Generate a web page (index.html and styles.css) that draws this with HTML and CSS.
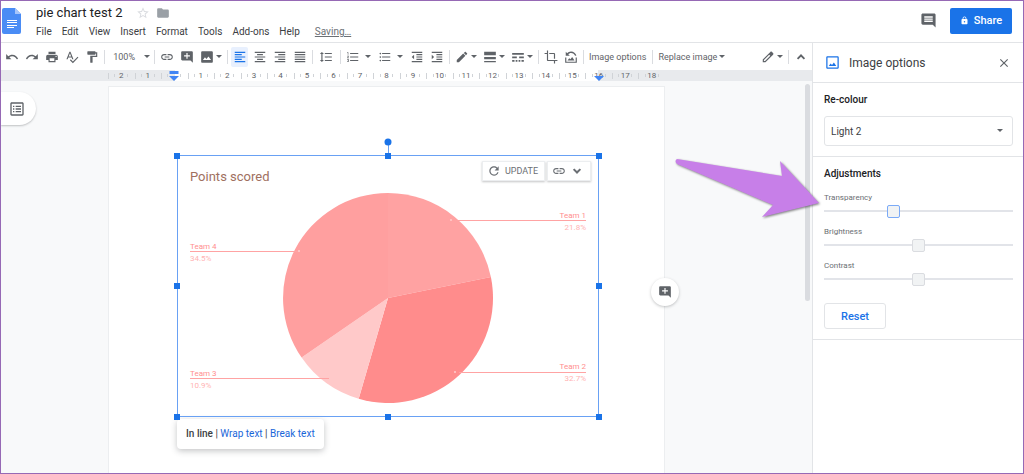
FILE: index.html
```
<!DOCTYPE html>
<html lang="en">
<head>
    <meta charset="UTF-8">
    <meta name="viewport" content="width=device-width, initial-scale=1.0">
    <title>pie chart test 2</title>
    <link rel="stylesheet" href="styles.css">
</head>
<body>
    <!-- Icon sprite -->
    <svg class="sprite" aria-hidden="true">
        <symbol id="undo" viewBox="0 0 24 24"><path d="M12.5 8c-2.65 0-5.05.99-6.9 2.6L2 7v9h9l-3.62-3.62c1.39-1.16 3.16-1.88 5.12-1.88 3.54 0 6.55 2.31 7.6 5.5l2.37-.78C21.08 11.03 17.15 8 12.5 8z"/></symbol>
        <symbol id="redo" viewBox="0 0 24 24"><path d="M18.4 10.6C16.55 8.99 14.15 8 11.5 8c-4.65 0-8.58 3.03-9.96 7.22L3.9 16c1.05-3.19 4.05-5.5 7.6-5.5 1.95 0 3.73.72 5.12 1.88L13 16h9V7l-3.6 3.6z"/></symbol>
        <symbol id="print" viewBox="0 0 24 24"><path d="M19 8H5c-1.66 0-3 1.34-3 3v6h4v4h12v-4h4v-6c0-1.66-1.34-3-3-3zm-3 11H8v-5h8v5zm3-7c-.55 0-1-.45-1-1s.45-1 1-1 1 .45 1 1-.45 1-1 1zm-1-9H6v4h12V3z"/></symbol>
        <symbol id="spell" viewBox="0 0 24 24"><path d="M12.45 16h2.09L9.43 3H7.57L2.46 16h2.09l1.12-3h5.64l1.14 3zm-6.02-5L8.5 5.48 10.57 11H6.43zm15.16.59l-8.09 8.09L9.83 16l-1.41 1.41 5.09 5.09L23 13l-1.41-1.41z"/></symbol>
        <symbol id="paint" viewBox="0 0 24 24"><path d="M18 4V3c0-.55-.45-1-1-1H5c-.55 0-1 .45-1 1v4c0 .55.45 1 1 1h12c.55 0 1-.45 1-1V6h1v4H9v11c0 .55.45 1 1 1h2c.55 0 1-.45 1-1v-9h8V4h-3z"/></symbol>
        <symbol id="link" viewBox="0 0 24 24"><path d="M3.9 12c0-1.71 1.39-3.1 3.1-3.1h4V7H7c-2.76 0-5 2.24-5 5s2.24 5 5 5h4v-1.9H7c-1.71 0-3.1-1.39-3.1-3.1zM8 13h8v-2H8v2zm9-6h-4v1.9h4c1.71 0 3.1 1.39 3.1 3.1s-1.39 3.1-3.1 3.1h-4V17h4c2.76 0 5-2.24 5-5s-2.24-5-5-5z"/></symbol>
        <symbol id="add-comment" viewBox="0 0 24 24"><path d="M22 4c0-1.1-.9-2-2-2H4c-1.1 0-2 .9-2 2v12c0 1.1.9 2 2 2h14l4 4V4zm-5 7h-4v4h-2v-4H7V9h4V5h2v4h4v2z"/></symbol>
        <symbol id="comment" viewBox="0 0 24 24"><path d="M21.99 4c0-1.1-.89-2-1.99-2H4c-1.1 0-2 .9-2 2v12c0 1.1.9 2 2 2h14l4 4-.01-18zM18 14H6v-2h12v2zm0-3H6V9h12v2zm0-3H6V6h12v2z"/></symbol>
        <symbol id="image" viewBox="0 0 24 24"><path d="M22 20V4c0-1.1-.9-2-2-2H4c-1.1 0-2 .9-2 2v16c0 1.1.9 2 2 2h16c1.1 0 2-.9 2-2zM8.5 12.500l2.500 3.010L14.500 11l4.500 6H5l3.500-4.500z"/></symbol>
        <symbol id="image-outline" viewBox="0 0 24 24"><path d="M20 4v16H4V4h16m0-2H4c-1.100 0-2 .9-2 2v16c0 1.100.9 2 2 2h16c1.100 0 2-.9 2-2V4c0-1.100-.9-2-2-2zM14.200 12l-3 4-2.200-2.600L6 17.500h12L14.200 12z"/></symbol>
        <symbol id="align-left" viewBox="0 0 24 24"><path d="M15 15H3v2h12v-2zm0-8H3v2h12V7zM3 13h18v-2H3v2zm0 8h18v-2H3v2zM3 3v2h18V3H3z"/></symbol>
        <symbol id="align-center" viewBox="0 0 24 24"><path d="M7 15v2h10v-2H7zm-4 6h18v-2H3v2zm0-8h18v-2H3v2zm4-6v2h10V7H7zM3 3v2h18V3H3z"/></symbol>
        <symbol id="align-right" viewBox="0 0 24 24"><path d="M3 21h18v-2H3v2zm6-4h12v-2H9v2zm-6-4h18v-2H3v2zm6-4h12V7H9v2zM3 3v2h18V3H3z"/></symbol>
        <symbol id="justify" viewBox="0 0 24 24"><path d="M3 21h18v-2H3v2zm0-4h18v-2H3v2zm0-4h18v-2H3v2zm0-4h18V7H3v2zm0-6v2h18V3H3z"/></symbol>
        <symbol id="spacing" viewBox="0 0 24 24"><path d="M6 7h2.500L5 3.500 1.500 7H4v10H1.500L5 20.500 8.500 17H6V7zm4-2v2h12V5H10zm0 14h12v-2H10v2zm0-6h12v-2H10v2z"/></symbol>
        <symbol id="numbers" viewBox="0 0 24 24"><path d="M2 17h2v.5H3v1h1v.5H2v1h3v-4H2v1zm1-9h1V4H2v1h1v3zm-1 3h1.800L2 13.100v.9h3v-1H3.200L5 10.900V10H2v1zm5-6v2h14V5H7zm0 14h14v-2H7v2zm0-6h14v-2H7v2z"/></symbol>
        <symbol id="bullets" viewBox="0 0 24 24"><path d="M4 10.500c-.83 0-1.500.67-1.500 1.500s.67 1.500 1.500 1.500 1.500-.67 1.500-1.500-.67-1.500-1.500-1.500zm0-6c-.83 0-1.500.67-1.500 1.500S3.170 7.500 4 7.500 5.500 6.830 5.500 6 4.830 4.500 4 4.500zm0 12c-.83 0-1.500.68-1.500 1.500s.68 1.500 1.500 1.500 1.500-.68 1.500-1.500-.67-1.500-1.500-1.500zM7 19h14v-2H7v2zm0-6h14v-2H7v2zm0-8v2h14V5H7z"/></symbol>
        <symbol id="outdent" viewBox="0 0 24 24"><path d="M11 17h10v-2H11v2zm-8-5l4 4V8l-4 4zm0 9h18v-2H3v2zM3 3v2h18V3H3zm8 6h10V7H11v2zm0 4h10v-2H11v2z"/></symbol>
        <symbol id="indent" viewBox="0 0 24 24"><path d="M3 21h18v-2H3v2zM3 8v8l4-4-4-4zm8 9h10v-2H11v2zM3 3v2h18V3H3zm8 6h10V7H11v2zm0 4h10v-2H11v2z"/></symbol>
        <symbol id="pencil" viewBox="0 0 24 24"><path d="M3 17.250V21h3.750L17.810 9.940l-3.750-3.750L3 17.250zM20.710 7.040c.39-.39.39-1.020 0-1.410l-2.340-2.340c-.39-.39-1.020-.39-1.410 0l-1.830 1.830 3.750 3.750 1.830-1.830z"/></symbol>
        <symbol id="pencil-outline" viewBox="0 0 24 24"><path d="M20.700 5.200l-1.900-1.900c-.8-.8-2-.8-2.800 0L3 16.300V21h4.700l13-13c.8-.8.8-2 0-2.800zM6.900 19H5v-1.900l9-9 1.900 1.900-9 9z"/></symbol>
        <symbol id="weight" viewBox="0 0 24 24"><path d="M2 3h20v6H2zM2 12h20v4H2zM2 19h20v2H2z"/></symbol>
        <symbol id="dash" viewBox="0 0 24 24"><path d="M2 5h20v3H2zM2 11h8v3H2zM14 11h8v3h-8zM2 17h4v3H2zM8 17h3v3H8zM13 17h3v3h-3zM18 17h4v3h-4z"/></symbol>
        <symbol id="crop" viewBox="0 0 24 24"><path d="M17 15h2V7c0-1.100-.9-2-2-2H9v2h8v8zM7 17V1H5v4H1v2h4v10c0 1.100.9 2 2 2h10v4h2v-4h4v-2H7z"/></symbol>
        <symbol id="reset-image" viewBox="0 0 24 24"><path d="M4 13v7h16v-7h2v9H2v-9zM6 18l3-4 2 2 3-4 4 6zM3 3v7h7L7.300 7.300C8.500 6 10.200 5 12 5c3.500 0 6 2 7 5l2.300-.6C20 5.500 16.500 2.500 12 2.500c-2.600 0-4.900 1.200-6.500 3z"/></symbol>
        <symbol id="chevron-up" viewBox="0 0 24 24"><path d="M12 7l-7 7 2.200 2.200L12 11.400l4.800 4.800L19 14z"/></symbol>
        <symbol id="chevron-down" viewBox="0 0 24 24"><path d="M16.600 7.600L12 12.200 7.400 7.600 5 10l7 7 7-7z"/></symbol>
        <symbol id="refresh" viewBox="0 0 24 24"><path d="M17.650 6.350C16.200 4.900 14.210 4 12 4c-4.420 0-7.990 3.580-7.990 8s3.570 8 7.990 8c3.730 0 6.840-2.550 7.730-6h-2.080c-.82 2.330-3.040 4-5.650 4-3.310 0-6-2.690-6-6s2.690-6 6-6c1.660 0 3.140.69 4.220 1.780L13 11h7V4l-2.350 2.350z"/></symbol>
        <symbol id="close" viewBox="0 0 24 24"><path d="M19 6.410L17.590 5 12 10.590 6.410 5 5 6.410 10.590 12 5 17.590 6.410 19 12 13.410 17.590 19 19 17.590 13.410 12z"/></symbol>
        <symbol id="lock" viewBox="0 0 24 24"><path d="M18 8h-1V6c0-2.760-2.240-5-5-5S7 3.240 7 6v2H6c-1.100 0-2 .9-2 2v10c0 1.100.9 2 2 2h12c1.100 0 2-.9 2-2V10c0-1.100-.9-2-2-2zm-6 9c-1.100 0-2-.9-2-2s.9-2 2-2 2 .9 2 2-.9 2-2 2zM9 8V6c0-1.700 1.300-3 3-3s3 1.300 3 3v2H9z"/></symbol>
        <symbol id="star" viewBox="0 0 24 24"><path d="M22 9.240l-7.190-.62L12 2 9.190 8.630 2 9.240l5.460 4.730L5.820 21 12 17.270 18.180 21l-1.630-7.030L22 9.240zM12 15.400l-3.760 2.270 1-4.280-3.320-2.880 4.380-.38L12 6.100l1.710 4.040 4.380.38-3.320 2.880 1 4.280L12 15.400z"/></symbol>
        <symbol id="folder" viewBox="0 0 24 24"><path d="M10 4H4c-1.100 0-2 .9-2 2v12c0 1.100.9 2 2 2h16c1.100 0 2-.9 2-2V8c0-1.100-.9-2-2-2h-8l-2-2z"/></symbol>
        <symbol id="outline" viewBox="0 0 24 24"><path d="M20 4v16H4V4h16m0-2H4c-1.100 0-2 .9-2 2v16c0 1.100.9 2 2 2h16c1.100 0 2-.9 2-2V4c0-1.100-.9-2-2-2zM6 7h2v2H6zM10 7h8v2h-8zM6 11h2v2H6zM10 11h8v2h-8zM6 15h2v2H6zM10 15h8v2h-8z"/></symbol>
    </svg>

    <header class="header">
        <svg class="logo" viewBox="0 0 19 26">
            <path fill="#4a8cf5" d="M2 0h11l6 6v18a2 2 0 0 1-2 2H2a2 2 0 0 1-2-2V2a2 2 0 0 1 2-2z"/>
            <path fill="#a6c5fa" d="M13 0l6 6h-6z"/>
            <path fill="#fff" d="M5 12h10v1H5zM5 14h10v1H5zM5 17h10v1H5zM5 19h7v1H5z"/>
        </svg>
        <div class="doc">
            <div class="doc-name">
                <h1>pie chart test 2</h1>
                <button class="icon-button faint" aria-label="Star"><svg><use href="#star"/></svg></button>
                <button class="icon-button grey" aria-label="Move"><svg><use href="#folder"/></svg></button>
            </div>
            <nav class="menu">
                <button>File</button>
                <button>Edit</button>
                <button>View</button>
                <button>Insert</button>
                <button>Format</button>
                <button>Tools</button>
                <button>Add-ons</button>
                <button>Help</button>
                <a href="#">Saving…</a>
            </nav>
        </div>
        <button class="comments" aria-label="Comments"><svg><use href="#comment"/></svg></button>
        <button class="share"><svg><use href="#lock"/></svg>Share</button>
    </header>

    <main class="main">
        <section class="editor">
            <div class="toolbar">
                <button aria-label="Undo"><svg><use href="#undo"/></svg></button>
                <button aria-label="Redo"><svg><use href="#redo"/></svg></button>
                <button aria-label="Print"><svg><use href="#print"/></svg></button>
                <button aria-label="Spelling"><svg><use href="#spell"/></svg></button>
                <button aria-label="Paint format"><svg><use href="#paint"/></svg></button>
                <span class="sep"></span>
                <button class="zoom">100%<i class="caret"></i></button>
                <span class="sep"></span>
                <button aria-label="Link"><svg><use href="#link"/></svg></button>
                <button aria-label="Add comment"><svg><use href="#add-comment"/></svg></button>
                <button class="drop" aria-label="Insert image"><svg><use href="#image"/></svg><i class="caret"></i></button>
                <span class="sep"></span>
                <button class="active" aria-label="Align left"><svg><use href="#align-left"/></svg></button>
                <button aria-label="Align centre"><svg><use href="#align-center"/></svg></button>
                <button aria-label="Align right"><svg><use href="#align-right"/></svg></button>
                <button aria-label="Justify"><svg><use href="#justify"/></svg></button>
                <span class="sep"></span>
                <button class="wide" aria-label="Line spacing"><svg><use href="#spacing"/></svg></button>
                <span class="sep"></span>
                <button class="drop list" aria-label="Numbered list"><svg><use href="#numbers"/></svg><i class="caret"></i></button>
                <button class="drop list" aria-label="Bulleted list"><svg><use href="#bullets"/></svg><i class="caret"></i></button>
                <button aria-label="Decrease indent"><svg><use href="#outdent"/></svg></button>
                <button aria-label="Increase indent"><svg><use href="#indent"/></svg></button>
                <span class="sep"></span>
                <button class="drop" aria-label="Border colour"><svg><use href="#pencil"/></svg><i class="caret"></i></button>
                <button class="drop" aria-label="Border weight"><svg><use href="#weight"/></svg><i class="caret"></i></button>
                <button class="drop" aria-label="Border dash"><svg><use href="#dash"/></svg><i class="caret"></i></button>
                <span class="sep"></span>
                <button aria-label="Crop"><svg><use href="#crop"/></svg></button>
                <button aria-label="Reset image"><svg><use href="#reset-image"/></svg></button>
                <span class="sep"></span>
                <button class="text">Image options</button>
                <span class="sep"></span>
                <button class="text">Replace image<i class="caret"></i></button>
                <button class="drop mode" aria-label="Editing mode"><svg><use href="#pencil-outline"/></svg><i class="caret"></i></button>
                <span class="sep"></span>
                <button aria-label="Hide menus"><svg><use href="#chevron-up"/></svg></button>
            </div>

            <div class="ruler">
                <div class="scale">
                    <span>2</span><span>1</span><span class="margin-left"></span><span>1</span><span>2</span><span>3</span><span>4</span><span>5</span><span>6</span><span>7</span><span>8</span><span>9</span><span>10</span><span>11</span><span>12</span><span>13</span><span>14</span><span>15</span><span class="margin-right">16</span><span>17</span><span>18</span>
                </div>
            </div>

            <div class="canvas">
                <button class="outline-tab" aria-label="Show outline"><svg><use href="#outline"/></svg></button>
                <div class="page">
                    <figure class="chart">
                        <svg viewBox="0 0 422 261">
                            <text class="chart-title" x="13" y="26">Points scored</text>
                            <path fill="#ffa2a2" d="M211 143V38A105 105 0 0 1 313.900 122.100z"/>
                            <path fill="#ff8c8c" d="M211 143L313.900 122.100A105 105 0 0 1 181.700 243.800z"/>
                            <path fill="#ffc9c9" d="M211 143L181.700 243.800A105 105 0 0 1 124.600 202.600z"/>
                            <path fill="#ff9f9f" d="M211 143L124.600 202.600A105 105 0 0 1 211 38z"/>
                            <g stroke="#ffa3a3">
                                <path d="M278 65.500H409M13 96.500H123"/>
                                <path d="M282 217.500H409M13 223.500H152"/>
                            </g>
                            <g fill="#ffcccc">
                                <circle cx="274" cy="65" r="1"/>
                                <circle cx="122" cy="96" r="1"/>
                                <circle cx="278" cy="217" r="1"/>
                            </g>
                            <g class="team">
                                <text x="13" y="94">Team 4</text>
                                <text x="13" y="221">Team 3</text>
                                <text class="end" x="409" y="63">Team 1</text>
                                <text class="end" x="409" y="214">Team 2</text>
                            </g>
                            <g class="share-of">
                                <text x="13" y="106">34.5%</text>
                                <text x="13" y="233">10.9%</text>
                                <text class="end" x="409" y="75">21.8%</text>
                                <text class="end" x="409" y="226">32.7%</text>
                            </g>
                            <!-- selection frame and handles -->
                            <path fill="none" stroke="#69a1f4" d="M.5 .5H421.500V261.500H.5zM211.500 0V-13"/>
                            <g fill="#1a73e8">
                                <circle cx="211" cy="-13" r="3.500"/>
                                <path d="M-3-2h6v6h-6zM208-2h6v6h-6zM419-2h6v6h-6zM-3 128h6v6h-6zM419 128h6v6h-6zM-3 259h6v6h-6zM208 259h6v6h-6zM419 259h6v6h-6z"/>
                            </g>
                        </svg>
                        <div class="chart-actions">
                            <button><svg><use href="#refresh"/></svg>UPDATE</button>
                            <button aria-label="Link options"><svg><use href="#link"/></svg><svg><use href="#chevron-down"/></svg></button>
                        </div>
                    </figure>
                    <div class="wrap-bar">
                        <b>In line</b> | <a href="#">Wrap text</a> | <a href="#">Break text</a>
                    </div>
                    <button class="add-note" aria-label="Add comment"><svg><use href="#add-comment"/></svg></button>
                </div>
                <div class="scrollbar"></div>
            </div>
        </section>

        <aside class="sidebar">
            <div class="sidebar-head">
                <svg><use href="#image-outline"/></svg>
                <h2>Image options</h2>
                <button class="close" aria-label="Close"><svg><use href="#close"/></svg></button>
            </div>
            <div class="group">
                <label class="group-title" for="recolour">Re-colour</label>
                <div class="select">
                    <select id="recolour"><option>Light 2</option></select>
                    <i class="caret"></i>
                </div>
            </div>
            <div class="group adjustments">
                <h3 class="group-title">Adjustments</h3>
                <div class="slider">
                    <label for="transparency">Transparency</label>
                    <input class="changed" type="range" id="transparency" value="36">
                </div>
                <div class="slider">
                    <label for="brightness">Brightness</label>
                    <input type="range" id="brightness" value="50">
                </div>
                <div class="slider">
                    <label for="contrast">Contrast</label>
                    <input type="range" id="contrast" value="50">
                </div>
                <button class="reset">Reset</button>
            </div>
            <svg class="arrow" viewBox="0 0 150 66">
                <path d="M4 3L109 20 107 5 146 47 89 61 100 49 4 8Q1 5 4 3z"/>
            </svg>
        </aside>
    </main>
</body>
</html>
```

FILE: styles.css
```
* {
    box-sizing: border-box;
}
body {
    display: flex;
    flex-direction: column;
    height: 100vh;
    margin: 0;
    border: 1px solid #9669b5;
    overflow: hidden;
    background: #fff;
    color: #3c4043;
    font-family: Roboto, sans-serif;
    font-size: 10px;
}
h1, h2, h3, figure {
    margin: 0;
    font-weight: 400;
}
button {
    display: flex;
    align-items: center;
    justify-content: center;
    padding: 0;
    border: none;
    background: none;
    color: inherit;
    font: inherit;
    cursor: pointer;
}
a {
    color: #1a66d9;
    text-decoration: none;
}
svg {
    flex: none;
    width: 14px;
    height: 14px;
    fill: currentColor;
}
.sprite {
    position: absolute;
    width: 0;
    height: 0;
}
.caret {
    flex: none;
    border: 3px solid transparent;
    border-top-color: #5f6368;
    border-bottom: 0;
}

/* Header */
.header {
    display: flex;
    align-items: center;
    height: 42px;
    padding-right: 11px;
    border-bottom: 1px solid #e2e4e7;
}
.header .logo {
    width: 19px;
    height: 26px;
    margin: 0 15px 2px 1px;
}
.doc {
    flex: 1;
}
.doc-name {
    display: flex;
    align-items: center;
    height: 20px;
    padding-bottom: 2px;
}
.doc-name h1 {
    margin-right: 14px;
    color: #202124;
    font-size: 13px;
}
.icon-button {
    margin-right: 6px;
}
.faint {
    color: #dadce0;
}
.grey {
    color: #9aa0a6;
}
.menu {
    display: flex;
    align-items: center;
    gap: 10px;
    height: 16px;
}
.menu a {
    margin-left: 5px;
    color: #6b6f74;
    text-decoration: underline;
}
.comments {
    margin: 0 13px 2px 0;
    color: #5f6368;
}
.comments svg {
    width: 17px;
    height: 17px;
}
.share {
    gap: 5px;
    width: 62px;
    height: 26px;
    margin-bottom: 2px;
    border-radius: 2px;
    background: #1a73e8;
    color: #fff;
    font-size: 11px;
    font-weight: 500;
}
.share svg {
    width: 9px;
    height: 9px;
}

/* Editor */
.main {
    display: flex;
    flex: 1;
    min-height: 0;
}
.editor {
    display: flex;
    flex: 1;
    flex-direction: column;
    min-width: 0;
}
.toolbar {
    display: flex;
    align-items: center;
    gap: 3px;
    height: 27px;
    padding: 0 3px 0 2px;
    color: #5f6368;
}
.toolbar button {
    width: 17px;
    height: 20px;
    border-radius: 2px;
}
.toolbar .active {
    background: #e8f0fe;
    color: #1a73e8;
}
.toolbar .wide {
    width: 20px;
}
.toolbar .drop {
    gap: 2px;
    width: 25px;
}
.toolbar .list {
    gap: 5px;
    width: 29px;
}
.toolbar .zoom {
    justify-content: flex-end;
    gap: 9px;
    width: 42px;
    font-size: 9px;
}
.toolbar .text {
    gap: 2px;
    width: auto;
    padding: 0 2px;
    font-size: 9px;
    white-space: nowrap;
}
.toolbar .mode {
    margin-left: auto;
}
.sep {
    width: 1px;
    height: 14px;
    margin-left: 1px;
    background: #dadce0;
}
.ruler {
    height: 11px;
    padding: 0 147px 0 107px;
    background: #e8eaed;
}
.scale {
    display: grid;
    grid-template-columns: repeat(21, 1fr);
    height: 11px;
    background: linear-gradient(90deg, transparent 12%, #fff 12%, #fff 88%, transparent 88%);
    color: #5f6368;
    font-size: 8px;
    line-height: 11px;
    text-align: center;
}
.scale span {
    position: relative;
    background:
        linear-gradient(#d0d3d7, #d0d3d7) 0 50% / 1px 6px no-repeat,
        linear-gradient(#d0d3d7, #d0d3d7) 25% 50% / 1px 3px no-repeat,
        linear-gradient(#d0d3d7, #d0d3d7) 75% 50% / 1px 3px no-repeat;
}
.margin-left::after,
.margin-right::after {
    content: "";
    position: absolute;
    bottom: 0;
    left: 50%;
    border: 5px solid transparent;
    border-top-color: #4285f4;
    border-bottom: 0;
    transform: translateX(-50%);
}
.margin-left::before {
    content: "";
    position: absolute;
    top: 1px;
    left: 50%;
    width: 9px;
    height: 3px;
    background: #4285f4;
    transform: translateX(-50%);
}
.canvas {
    position: relative;
    display: flex;
    flex: 1;
    min-height: 0;
    padding: 5px 147px 0 107px;
    background: #f8f9fa;
}
.page {
    position: relative;
    flex: 1;
    padding: 68px 65px 0 68px;
    border: 1px solid #eceef0;
    border-width: 1px 1px 0;
    background: #fff;
}
.outline-tab {
    position: absolute;
    top: 11px;
    left: 0;
    width: 35px;
    height: 33px;
    padding-right: 4px;
    border-radius: 0 17px 17px 0;
    background: #fff;
    box-shadow: 0 1px 2px rgba(60,64,67,0.3);
    color: #5f6368;
}
.outline-tab svg {
    width: 16px;
    height: 16px;
}
.scrollbar {
    position: absolute;
    top: 3px;
    right: 2px;
    width: 5px;
    height: 217px;
    border-radius: 3px;
    background: #dadce0;
}
.add-note {
    position: absolute;
    top: 191px;
    right: -15px;
    width: 28px;
    height: 28px;
    border-radius: 50%;
    background: #fff;
    box-shadow: 0 1px 3px rgba(60,64,67,0.3);
    color: #5f6368;
}

/* Chart */
.chart {
    position: relative;
}
.chart > svg {
    display: block;
    width: 100%;
    height: auto;
    overflow: visible;
}
.chart-title {
    fill: #a0705f;
    font-size: 13px;
}
.team {
    fill: #ff8f8f;
    font-size: 8px;
}
.share-of {
    fill: #ffb3b3;
    font-size: 8px;
}
.end {
    text-anchor: end;
}
.chart-actions {
    position: absolute;
    top: 6px;
    right: 8px;
    display: flex;
    gap: 2px;
}
.chart-actions button {
    gap: 4px;
    height: 20px;
    padding: 0 6px 0 4px;
    border: 1px solid #eceef0;
    background: #fff;
    box-shadow: 0 1px 2px rgba(60,64,67,0.3);
    color: #6b6f74;
    font-size: 9px;
}
.wrap-bar {
    width: max-content;
    margin-top: 3px;
    padding: 8px 9px;
    border-radius: 4px;
    background: #fff;
    box-shadow: 0 2px 6px rgba(60,64,67,0.3);
    line-height: 14px;
}
.wrap-bar b {
    font-weight: 500;
}

/* Sidebar */
.sidebar {
    position: relative;
    width: 211px;
    border-left: 1px solid #e2e4e7;
}
.sidebar-head {
    display: flex;
    align-items: center;
    height: 40px;
    padding: 0 12px;
    border-bottom: 1px solid #e2e4e7;
}
.sidebar-head > svg {
    width: 15px;
    height: 15px;
    color: #1a73e8;
}
.sidebar-head h2 {
    flex: 1;
    margin-left: 9px;
    font-size: 12px;
}
.close {
    color: #5f6368;
}
.group {
    padding: 10px 10px 10px 11px;
    border-bottom: 1px solid #e2e4e7;
}
.group-title {
    display: block;
    color: #202124;
    font-size: 10px;
    font-weight: 500;
    line-height: 14px;
}
.select {
    position: relative;
    margin-top: 9px;
}
.select select {
    display: block;
    width: 100%;
    height: 30px;
    padding: 0 6px;
    border: 1px solid #e2e4e7;
    border-radius: 3px;
    appearance: none;
    background: #fff;
    color: #3c4043;
    font: inherit;
    font-size: 10px;
}
.select .caret {
    position: absolute;
    top: 13px;
    right: 10px;
}
.adjustments .group-title {
    margin-bottom: 11px;
}
.slider {
    margin-bottom: 8px;
    color: #6b6f74;
    font-size: 8px;
    line-height: 12px;
}
.slider label {
    display: block;
}
.slider input {
    display: block;
    width: 100%;
    height: 14px;
    margin: 0;
    appearance: none;
    background: linear-gradient(#e2e4e9, #e2e4e9) center / 100% 2px no-repeat;
}
.slider input::-webkit-slider-thumb {
    width: 13px;
    height: 13px;
    appearance: none;
    border: 1px solid #dadce0;
    border-radius: 2px;
    background: #f1f3f4;
}
.slider input.changed::-webkit-slider-thumb {
    border-color: #7baaf7;
}
.reset {
    width: 62px;
    height: 26px;
    margin-top: 17px;
    border: 1px solid #e2e4e7;
    border-radius: 3px;
    color: #1a73e8;
    font-size: 11px;
    font-weight: 500;
}
.arrow {
    position: absolute;
    top: 113px;
    left: -140px;
    width: 150px;
    height: 66px;
    fill: #c77fe8;
    filter: drop-shadow(1px 1px 1px rgba(0,0,0,0.5));
    pointer-events: none;
}
```
